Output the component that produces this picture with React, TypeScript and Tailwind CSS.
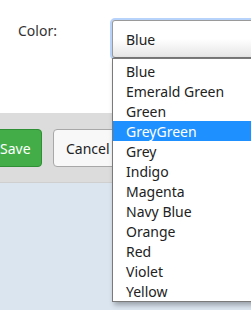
const colors = [
  "Blue",
  "Emerald Green",
  "Green",
  "GreyGreen",
  "Grey",
  "Indigo",
  "Magenta",
  "Navy Blue",
  "Orange",
  "Red",
  "Violet",
  "Yellow",
];

export default function App() {
  const selected = "GreyGreen";
  return (
    <div className="relative h-[310px] w-[251px] overflow-hidden bg-[#dbe5f0] font-['Noto_Sans',sans-serif] text-[14px] text-[#222]">
      <div className="flex h-[113px] bg-white">
        <div className="pl-[18px] pt-[20px] text-[#333]">Color:</div>
        <div className="ml-auto pt-[18px]">
          <div className="h-[42px] w-[150px] -mr-[9px] rounded-[5px] border-[2px] border-[#b7d3fb]">
            <div className="flex h-[38px] items-center rounded-[3px] border border-[#9a9a9a] border-b-[#777] bg-gradient-to-b from-white via-white to-[#e6e6e6] pl-[13px]">
              Blue
            </div>
          </div>
        </div>
      </div>

      <div className="flex h-[70px] gap-[11px] border-b border-[#cfcfcf] bg-[#dcdcdc] pt-[16px]">
        <button className="-ml-[20px] h-[38px] w-[62px] rounded-[4px] border border-[#2f8f34] bg-[#43ae48] pl-[19px] text-left text-white">
          Save
        </button>
        <button className="h-[38px] w-[80px] rounded-[4px] border border-[#a8a8a8] bg-[#f8f8f8] pl-[12px] text-left text-[#222]">
          Cancel
        </button>
      </div>

      <ul className="absolute left-[112px] top-[58px] w-[160px] border border-[#7a7a7a] bg-white pt-[2px] shadow-[2px_3px_5px_rgba(0,0,0,0.3)]">
        {colors.map((c) => (
          <li
            key={c}
            className={
              c === selected
                ? "flex h-[20px] items-center bg-[#1e90ff] pl-[13px] text-white"
                : "flex h-[20px] items-center pl-[13px] text-[#222]"
            }
          >
            {c}
          </li>
        ))}
      </ul>
    </div>
  );
}
